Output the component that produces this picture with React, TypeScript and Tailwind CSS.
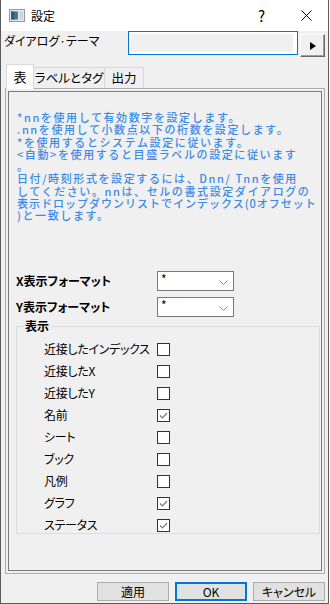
import React from 'react'

const font = { fontFamily: '"Noto Sans CJK JP", "Noto Sans", sans-serif' }
const palt = { fontFeatureSettings: '"palt"' }

function AppIcon() {
  return (
    <svg width="16" height="13" viewBox="0 0 16 13">
      <rect x="0.5" y="0.5" width="15" height="12" fill="#e6e6e6" stroke="#9a9a9a" />
      <rect x="2" y="2.5" width="7" height="8" fill="#3a7f8c" />
      <rect x="2" y="2.5" width="3.5" height="8" fill="#2d5f86" />
      <rect x="10.5" y="2.5" width="3.5" height="8" fill="#cfd3d6" />
    </svg>
  )
}

function Checkbox({ checked }: { checked?: boolean }) {
  return (
    <div className="w-[13px] h-[13px] border border-[#333333] bg-white flex items-center justify-center">
      {checked && (
        <svg width="11" height="11" viewBox="0 0 11 11">
          <polyline points="2,5.5 4.5,8 9,3" fill="none" stroke="#7a7a7a" strokeWidth="1.2" />
        </svg>
      )}
    </div>
  )
}

function Select() {
  return (
    <div className="w-[77px] h-[20px] border border-[#7a7a7a] bg-white flex items-start justify-between pl-[3px] pr-[5px]">
      <span className="text-[12px] leading-[14px] text-black">*</span>
      <svg width="9" height="5" viewBox="0 0 9 5" className="mt-[8px]">
        <polyline points="0.5,0.5 4.5,4.5 8.5,0.5" fill="none" stroke="#8a8a8a" strokeWidth="1" />
      </svg>
    </div>
  )
}

const items: [string, boolean][] = [
  ['近接したインデックス', false],
  ['近接したX', false],
  ['近接したY', false],
  ['名前', true],
  ['シート', false],
  ['ブック', false],
  ['凡例', false],
  ['グラフ', true],
  ['ステータス', true],
]

// 折り返し位置は元画像に合わせて固定
const helpLines = [
  '*nnを使用して有効数字を設定します。',
  '.nnを使用して小数点以下の桁数を設定します。',
  '*を使用するとシステム設定に従います。',
  '<自動>を使用すると目盛ラベルの設定に従います',
  '。',
  '日付/時刻形式を設定するには、Dnn/ Tnnを使用',
  'してください。nnは、セルの書式設定ダイアログの',
  '表示ドロップダウンリストでインデックス(0オフセット',
  ')と一致します。',
]

export default function App() {
  return (
    <div className="w-[330px] h-[604px] bg-white" style={font}>
      <div className="w-[329px] h-[604px] bg-[#f0f0f0] border-l border-r border-b border-[#5a5a5a] flex flex-col text-[12px] text-black">
        {/* タイトルバー */}
        <div className="h-[31px] bg-white flex items-center">
          <div className="ml-[8px]">
            <AppIcon />
          </div>
          <span className="ml-[6px] text-[12px] leading-none">設定</span>
          <span className="ml-auto mr-[36px] text-[15px] leading-none">?</span>
          <svg width="11" height="11" viewBox="0 0 11 11" className="mr-[16px]">
            <path d="M0.5 0.5 L10.5 10.5 M10.5 0.5 L0.5 10.5" stroke="#000" strokeWidth="1" />
          </svg>
        </div>

        {/* ダイアログテーマ */}
        <div className="h-[33px] flex items-start">
          <div className="w-[127px] pl-[3px] pt-[3px] leading-[14px] whitespace-nowrap" style={palt}>
            ダイアログ·テーマ
          </div>
          <div className="w-[170px] h-[24px] border border-[#0078d7] bg-white p-[2px] pr-[4px]">
            <div className="w-full h-full bg-[#f0f0f0]" />
          </div>
          <div className="ml-[2px] mt-[3px] w-[25px] h-[23px] bg-[#f0f0f0] border-t border-l border-white border-r border-b border-r-[#696969] border-b-[#696969] shadow-[inset_-1px_-1px_0_#a0a0a0] flex items-center justify-center">
            <svg width="6" height="8" viewBox="0 0 6 8">
              <polygon points="0,0 6,4 0,8" fill="#000" />
            </svg>
          </div>
        </div>

        {/* タブ */}
        <div className="h-[24px] flex items-end pl-[5px] whitespace-nowrap" style={palt}>
          <div className="relative z-10 -mb-[1px] w-[28px] h-[25px] bg-white border-t border-l border-r border-[#d9d9d9] flex items-center justify-center text-[13px]">
            表
          </div>
          <div className="w-[71px] h-[21px] bg-[#f0f0f0] border-t border-r border-[#d9d9d9] flex items-center justify-center text-[12.5px]">
            ラベルとタグ
          </div>
          <div className="w-[39px] h-[21px] bg-[#f0f0f0] border-t border-r border-[#d9d9d9] flex items-center justify-center text-[12.5px]">
            出力
          </div>
        </div>

        {/* タブページ */}
        <div className="ml-[4px] w-[320px] h-[486px] border border-[#adadad] p-[2px]">
          <div className="w-full h-full border border-[#7a7a7a] flex flex-col">
            <div className="h-[179px] pl-[8px] pt-[19px] text-[11px] leading-[12.3px] tracking-[1.6px] font-medium text-[#3b8ae6] whitespace-pre">
              {helpLines.map((l, i) => (
                <div key={i} className={i === 7 ? 'tracking-[1px]' : ''}>{l}</div>
              ))}
            </div>

            <div className="flex items-center pl-[7px] h-[20px]">
              <div className="w-[141px] font-bold" style={palt}>X表示フォーマット</div>
              <Select />
            </div>
            <div className="flex items-center pl-[7px] h-[20px] mt-[6px]">
              <div className="w-[141px] font-bold" style={palt}>Y表示フォーマット</div>
              <Select />
            </div>

            <div className="relative ml-[7px] mt-[9px] w-[304px] h-[208px] border border-[#dcdcdc] pt-[11px]">
              <span className="absolute -top-[9px] left-[7px] px-[1px] bg-[#f0f0f0] font-bold leading-[16px]">表示</span>
              {items.map(([label, checked]) => (
                <div key={label} className="h-[22px] flex items-center pl-[27px]">
                  <div className="w-[113px] tracking-[-0.3px] whitespace-nowrap" style={palt}>{label}</div>
                  <Checkbox checked={checked} />
                </div>
              ))}
            </div>
          </div>
        </div>

        {/* ボタン */}
        <div className="mt-[8px] flex justify-end gap-[6px] pr-[3px]">
          <button className="w-[72px] h-[19px] bg-[#e1e1e1] border border-[#adadad] text-[12px] leading-none flex items-center justify-center">
            適用
          </button>
          <button className="w-[72px] h-[19px] bg-[#e1e1e1] border-2 border-[#0078d7] text-[12px] leading-none flex items-center justify-center">
            OK
          </button>
          <button className="w-[72px] h-[19px] bg-[#e1e1e1] border border-[#adadad] text-[12px] leading-none flex items-center justify-center" style={palt}>
            キャンセル
          </button>
        </div>
      </div>
    </div>
  )
}
